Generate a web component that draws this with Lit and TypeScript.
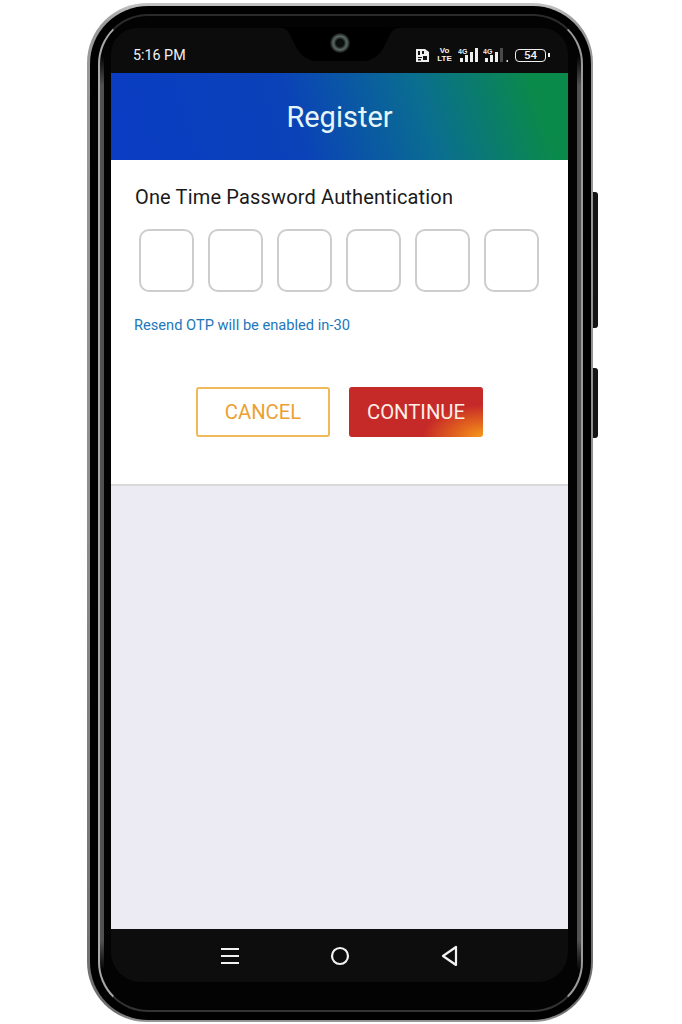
import { LitElement, html, css, svg } from "lit";
import { customElement } from "lit/decorators.js";

@customElement("app-root")
export class AppRoot extends LitElement {
  static styles = css`
    :host { display: block; width: 682px; height: 1024px; background: #fff; font-family: Roboto, "Liberation Sans", sans-serif; overflow: hidden; }
    .page { height: 1024px; padding: 3px 0 0 87px; box-sizing: border-box; }
    .phone { position: relative; width: 506px; height: 1019px; box-sizing: border-box; border-radius: 60px; padding: 2.5px; background: linear-gradient(180deg, #c4c4c4 0, #9a9a9a 2%, #8e8e8e 50%, #6e6e6e 99%, #9a9a9a 100%); }
    .bezel { height: 100%; box-sizing: border-box; border-radius: 58px; background: #000; padding: 8px; }
    .rim { height: 100%; box-sizing: border-box; border-radius: 50px; border: 2px solid; border-color: #2a2a2a #9a9a9a #333 #a8a8a8;
      background:
        linear-gradient(180deg, #030303 0, #030303 4%, transparent 7%, transparent 93%, #030303 96%, #030303 100%),
        linear-gradient(90deg, #555 0, #505050 3.5px, #030303 3.5px, #030303 calc(100% - 3.5px), #505050 calc(100% - 3.5px), #555 100%);
      padding: 12.5px 12.5px 0 11.5px; display: flex; flex-direction: column; }
    .status { height: 45px; flex: none; background: #0c0c0c; border-radius: 26px 26px 0 0; display: flex; align-items: flex-end; justify-content: space-between; padding: 0 22px 9px 22px; box-sizing: border-box; color: #f2f2f2; position: relative; }
    .time { font-size: 14.3px; line-height: 18px; }
    .notch { position: absolute; left: 164px; top: -1px; display: block; }
    .cam { position: absolute; left: 219px; top: 5px; width: 20px; height: 20px; border-radius: 50%; background: radial-gradient(circle, #0a0f0e 0 26%, #5c6a65 48%, #2a302e 62%, #050505 76%); }
    .indicators { display: flex; align-items: center; height: 16px; margin-bottom: 1px; }
    .sim { width: 13px; height: 13px; margin-right: 8px; }
    .net { font-size: 8px; line-height: 8px; font-weight: 700; text-align: center; width: 15px; margin-right: 6px; font-family: "Liberation Sans", sans-serif; }
    .sig1 { display: block; margin-right: 4px; }
    .sig2 { display: block; margin-right: 7px; }
    .batt { width: 31px; height: 13px; box-sizing: border-box; border: 1.6px solid #eee; border-radius: 4px; font-size: 11.5px; line-height: 10px; text-align: center; font-weight: 500; position: relative; }
    .batt::after { content: ""; position: absolute; right: -4.5px; top: 3px; width: 1.8px; height: 4px; background: #eee; }
    .header { height: 87px; flex: none; color: #e6f5f8; font-size: 29px; display: flex; align-items: center; justify-content: center; background: linear-gradient(72deg, #0a3cc4 0%, #0a42b8 40%, #0a6e90 68%, #0a8a4a 92%); }
    .card { height: 326px; flex: none; background: #fff; box-sizing: border-box; padding: 24px 24px 0 24px; border-bottom: 2px solid #d9d9d9; }
    .title { margin: 0; font-size: 20px; font-weight: 400; line-height: 26px; color: #1a1a1a; letter-spacing: 0.16px; }
    .otp { display: flex; gap: 14px; margin: 19px 0 0 4px; }
    .box { width: 55px; height: 63px; box-sizing: border-box; border: 2px solid #cdcdcd; border-radius: 10px; }
    .resend { margin: 23px 0 0 -1px; font-size: 14.65px; line-height: 20px; color: #2277bb; }
    .actions { display: flex; gap: 19px; margin: 52px 0 0 61px; }
    .btn { width: 134px; height: 50px; box-sizing: border-box; border-radius: 3px; display: flex; align-items: center; justify-content: center; font-size: 20.3px; }
    .cancel { border: 2px solid #efb95c; color: #eba132; background: #fff; }
    .continue { color: #fdeee6; background: radial-gradient(ellipse 60px 32px at 100% 100%, #f59a1c 0, #e2641e 45%, rgba(200, 42, 38, 0) 100%), #c62a28; }
    .fill { flex: none; height: 443px; background: #ecebf4; }
    .nav { flex: none; height: 53px; display: flex; align-items: center; justify-content: center; background: #0d0d0d; border-radius: 0 0 30px 30px; }
    .navitem { width: 110px; display: flex; justify-content: center; }
    .side { position: absolute; right: -5px; width: 5px; background: #141414; border-radius: 0 3px 3px 0; }
    .s1 { top: 189px; height: 136px; }
    .s2 { top: 365px; height: 70px; }
  `;

  render() {
    return html`<div class="page"><div class="phone">
      <div class="side s1"></div><div class="side s2"></div>
      <div class="bezel"><div class="rim">
        <div class="status">
          <div class="time">5:16 PM</div>
          <svg class="notch" width="130" height="34" viewBox="0 0 130 34"><path d="M0 0C14 0 14 6 20 18C26 30 34 34 42 34H88C96 34 104 30 110 18C116 6 116 0 130 0Z" fill="#000"/></svg>
          <div class="cam"></div>
          <div class="indicators">
            <svg class="sim" viewBox="0 0 13 13"><path d="M0 0h9l4 3v10H0z" fill="#eee"/><path d="M2 2h2v4H2zM6 2h2v3H6zM2 8h4v1H2zM7 7h4v4H7zM2 10h3v1.500H2z" fill="#111"/></svg>
            <div class="net">Vo<br />LTE</div>
            ${this.bars(21, 4, false)}
            ${this.bars(25, 3, true)}
            <div class="batt">54</div>
          </div>
        </div>
        <div class="header">Register</div>
        <div class="card">
          <h1 class="title">One Time Password Authentication</h1>
          <div class="otp">${[0,1,2,3,4,5].map(() => html`<div class="box"></div>`)}</div>
          <div class="resend">Resend OTP will be enabled in-30</div>
          <div class="actions"><div class="btn cancel">CANCEL</div><div class="btn continue">CONTINUE</div></div>
        </div>
        <div class="fill"></div>
        <div class="nav">
          <div class="navitem"><svg width="20" height="20" viewBox="0 0 20 20"><path d="M1 3h18M1 10h18M1 17h18" stroke="#f2f2f2" stroke-width="2.2" fill="none"/></svg></div>
          <div class="navitem"><svg width="20" height="20" viewBox="0 0 20 20"><circle cx="10" cy="10" r="8" stroke="#f2f2f2" stroke-width="2.2" fill="none"/></svg></div>
          <div class="navitem"><svg width="20" height="22" viewBox="0 0 20 22"><path d="M16 2v18L3 11z" stroke="#f2f2f2" stroke-width="2.2" stroke-linejoin="round" fill="none"/></svg></div>
        </div>
      </div></div>
    </div></div>`;
  }

  private bars(width: number, lit: number, comma: boolean) {
    const hs = [4, 7, 10, 14];
    return html`<svg class=${comma ? "sig2" : "sig1"} width=${width} height="14" viewBox="0 0 ${width} 14">
      <text x="0" y="5.500" font-size="7" font-weight="700" fill="#eee" font-family="Liberation Sans, sans-serif">4G</text>
      ${hs.map((h, i) => svg`<rect x=${2 + i * 5} y=${14 - h} width="3" height=${h} fill=${i < lit ? "#eee" : "#4a4a4a"}></rect>`)}
      ${comma ? svg`<rect x="23.500" y="12" width="1.500" height="2.500" fill="#ddd"></rect>` : ""}
    </svg>`;
  }
}
